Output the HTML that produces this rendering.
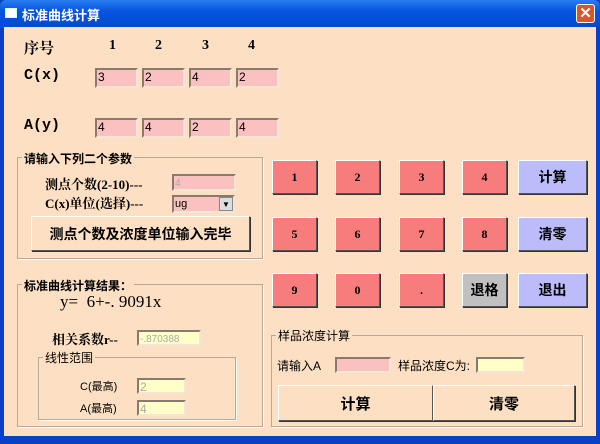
<!DOCTYPE html>
<html><head><meta charset="utf-8"><style>
*{box-sizing:border-box;margin:0;padding:0}
body{width:600px;height:444px;overflow:hidden;background:#0a3fc8;font-family:"Liberation Serif","SimSun","Noto Serif CJK SC",serif;position:relative}
.tb{position:absolute;left:0;top:0;width:600px;height:27px;background:linear-gradient(#2a7cf0,#0655e0 40%,#0449d0);border-radius:6px 6px 0 0}
.tt{position:absolute;left:22px;top:5px;color:#fff;font:bold 13px "Liberation Sans","Noto Sans CJK SC",sans-serif}
.ico{position:absolute;left:5px;top:8px;width:12px;height:10px;background:#fff;border:1px solid #cfe}
.x{position:absolute;left:576px;top:4px;width:19px;height:19px;background:#d9542f;border:1px solid #fff;border-radius:3px;color:#fff;font:bold 15px "Liberation Sans",sans-serif;text-align:center;line-height:17px}
.bd{position:absolute;left:4px;top:27px;width:592px;height:409px;background:#fde0c3}
.a{position:absolute;white-space:nowrap}
.l{font-weight:bold;font-size:14px;color:#000;font-family:"Liberation Serif","Noto Serif CJK SC",serif}
.m{font-family:"Liberation Mono","Noto Serif CJK SC",monospace}
.in{position:absolute;background:#fbc0c0;border:2px solid;border-color:#8a7a6e #f5e5d5 #f5e5d5 #8a7a6e;font:12px "Liberation Sans",sans-serif;padding-left:1px;line-height:15px}
.y{background:#ffffc8;color:#aaa}
.fr{position:absolute;border:1px solid #b8a896;box-shadow:1px 1px 0 #fff}
.ft{position:absolute;background:#fde0c3;font:bold 12px "Liberation Sans","Noto Sans CJK SC",sans-serif;padding:0 2px}
.b{position:absolute;border:1px solid;border-color:#fff #555 #555 #fff;box-shadow:1px 1px 0 #333;text-align:center;font:bold 12px "Liberation Sans","Noto Sans CJK SC",sans-serif;display:flex;align-items:center;justify-content:center}
.r{background:#f77d7d;font:bold 12px "Liberation Serif",serif}.p{background:#bcbcfa;font-size:14px}.g{background:#c0c0c0;font-size:14px}.w{background:#fde0c3}
.n{font:12px "Liberation Sans","Noto Sans CJK SC",sans-serif}
</style></head><body>
<div class="tb"><div class="ico"></div><div class="tt">标准曲线计算</div><div class="x">✕</div></div>
<div class="bd"></div>
<div class="a l" style="left:24px;top:37px;font-size:15px">序号</div>
<div class="a l" style="left:109px;top:38px">1</div><div class="a l" style="left:155px;top:38px">2</div><div class="a l" style="left:202px;top:38px">3</div><div class="a l" style="left:248px;top:38px">4</div>
<div class="a l m" style="left:24px;top:67px;font-size:15px">C(x)</div>
<div class="a l m" style="left:24px;top:117px;font-size:15px">A(y)</div>
<div class="in" style="left:95px;top:68px;width:43px;height:20px">3</div>
<div class="in" style="left:142px;top:68px;width:43px;height:20px">2</div>
<div class="in" style="left:189px;top:68px;width:43px;height:20px">4</div>
<div class="in" style="left:236px;top:68px;width:43px;height:20px">2</div>
<div class="in" style="left:95px;top:118px;width:43px;height:20px">4</div>
<div class="in" style="left:142px;top:118px;width:43px;height:20px">4</div>
<div class="in" style="left:189px;top:118px;width:43px;height:20px">2</div>
<div class="in" style="left:236px;top:118px;width:43px;height:20px">4</div>

<div class="fr" style="left:17px;top:157px;width:246px;height:102px"></div>
<div class="ft" style="left:22px;top:150px">请输入下列二个参数</div>
<div class="a l" style="left:45px;top:174px;font-size:13px">测点个数(2-10)---</div>
<div class="in y" style="left:172px;top:174px;width:64px;height:17px;background:#fbc0c0;font-size:10px">4</div>
<div class="a l" style="left:45px;top:193px;font-size:13px">C(x)单位(选择)---</div>
<div class="in" style="left:172px;top:195px;width:63px;height:18px;font-size:11px">ug<div style="position:absolute;right:0;top:0;width:14px;height:14px;background:#ddd;border:1px solid #888;font-size:8px;text-align:center;line-height:13px">▼</div></div>
<div class="b w" style="left:31px;top:216px;width:219px;height:35px;font-size:14px">测点个数及浓度单位输入完毕</div>

<div class="fr" style="left:17px;top:284px;width:246px;height:143px"></div>
<div class="ft" style="left:22px;top:277px">标准曲线计算结果：</div>
<div class="a" style="left:60px;top:292px;font-size:17px">y=&nbsp; 6+-. 9091x</div>
<div class="a l" style="left:52px;top:329px;font-size:13px">相关系数r--</div>
<div class="in y" style="left:137px;top:330px;width:64px;height:16px;font-size:10px">-.870388</div>
<div class="fr" style="left:38px;top:357px;width:198px;height:63px"></div>
<div class="ft" style="left:43px;top:349px;font-weight:normal">线性范围</div>
<div class="a n" style="left:80px;top:378px;font-size:11px">C(最高)</div>
<div class="in y" style="left:137px;top:378px;width:49px;height:16px">2</div>
<div class="a n" style="left:80px;top:400px;font-size:11px">A(最高)</div>
<div class="in y" style="left:137px;top:400px;width:49px;height:16px">4</div>

<div class="b r" style="left:272px;top:160px;width:45px;height:34px">1</div>
<div class="b r" style="left:335px;top:160px;width:45px;height:34px">2</div>
<div class="b r" style="left:399px;top:160px;width:45px;height:34px">3</div>
<div class="b r" style="left:462px;top:160px;width:45px;height:34px">4</div>
<div class="b p" style="left:518px;top:160px;width:69px;height:34px">计算</div>
<div class="b r" style="left:272px;top:217px;width:45px;height:34px">5</div>
<div class="b r" style="left:335px;top:217px;width:45px;height:34px">6</div>
<div class="b r" style="left:399px;top:217px;width:45px;height:34px">7</div>
<div class="b r" style="left:462px;top:217px;width:45px;height:34px">8</div>
<div class="b p" style="left:518px;top:217px;width:69px;height:34px">清零</div>
<div class="b r" style="left:272px;top:273px;width:45px;height:34px">9</div>
<div class="b r" style="left:335px;top:273px;width:45px;height:34px">0</div>
<div class="b r" style="left:399px;top:273px;width:45px;height:34px">.</div>
<div class="b g" style="left:462px;top:273px;width:45px;height:34px">退格</div>
<div class="b p" style="left:518px;top:273px;width:69px;height:34px">退出</div>

<div class="fr" style="left:271px;top:335px;width:312px;height:92px"></div>
<div class="ft" style="left:276px;top:327px;font-weight:normal">样品浓度计算</div>
<div class="a n" style="left:277px;top:357px">请输入A</div>
<div class="in" style="left:335px;top:357px;width:56px;height:16px"></div>
<div class="a n" style="left:398px;top:357px">样品浓度C为:</div>
<div class="in y" style="left:476px;top:357px;width:49px;height:16px"></div>
<div class="b w" style="left:278px;top:385px;width:155px;height:36px;font-size:15px">计算</div>
<div class="b w" style="left:433px;top:385px;width:142px;height:36px;font-size:15px">清零</div>
</body></html>
